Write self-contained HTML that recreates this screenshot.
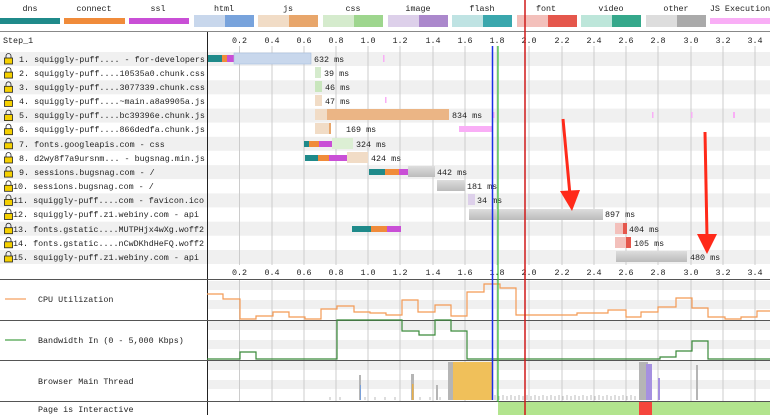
<!DOCTYPE html>
<html><head><meta charset="utf-8"><style>
html,body{margin:0;padding:0;background:#fff;width:770px;height:415px;overflow:hidden}
svg{display:block}
text{font-family:"Liberation Mono","DejaVu Sans Mono",monospace;font-size:8.4px;fill:#222}
</style></head><body>
<svg width="770" height="415" viewBox="0 0 770 415" xmlns="http://www.w3.org/2000/svg">
<defs>
<linearGradient id="g" x1="0" y1="0" x2="0" y2="1"><stop offset="0" stop-color="#ddd"/><stop offset="1" stop-color="#bbb"/></linearGradient>
</defs>
<!-- legend -->
<g text-anchor="middle">
<text x="30" y="11">dns</text><text x="94" y="11">connect</text><text x="158" y="11">ssl</text><text x="224" y="11">html</text><text x="288" y="11">js</text><text x="353" y="11">css</text><text x="418" y="11">image</text><text x="482" y="11">flash</text><text x="546" y="11">font</text><text x="611" y="11">video</text><text x="676" y="11">other</text><text x="740" y="11">JS Execution</text>
</g>
<rect x="0" y="18" width="60" height="6" fill="#1f8a8a"/>
<rect x="64" y="18" width="61" height="6" fill="#f08b3a"/>
<rect x="129" y="18" width="60" height="6" fill="#c94fd6"/>
<rect x="194" y="15" width="31" height="12" fill="#c8d7ec"/><rect x="225" y="15" width="29" height="12" fill="#78a3dc"/>
<rect x="258" y="15" width="31" height="12" fill="#f1dcc6"/><rect x="289" y="15" width="29" height="12" fill="#e8a66b"/>
<rect x="323" y="15" width="31" height="12" fill="#d5ebcd"/><rect x="354" y="15" width="29" height="12" fill="#9ed68e"/>
<rect x="388" y="15" width="31" height="12" fill="#ddd0ea"/><rect x="419" y="15" width="29" height="12" fill="#ab88cc"/>
<rect x="452" y="15" width="31" height="12" fill="#bfe3e3"/><rect x="483" y="15" width="29" height="12" fill="#3aa7ad"/>
<rect x="517" y="15" width="31" height="12" fill="#f3c0bb"/><rect x="548" y="15" width="29" height="12" fill="#e5574c"/>
<rect x="581" y="15" width="31" height="12" fill="#bde6da"/><rect x="612" y="15" width="29" height="12" fill="#35a88b"/>
<rect x="646" y="15" width="31" height="12" fill="#ddd"/><rect x="677" y="15" width="29" height="12" fill="#aaa"/>
<rect x="710" y="18" width="60" height="6" fill="#f9aef6"/>
<line x1="0" y1="31.5" x2="770" y2="31.5" stroke="#888" stroke-width="1"/>
<!-- row bands -->
<g fill="#f0f0f0">
<rect x="0" y="52" width="770" height="14"/><rect x="0" y="80.3" width="770" height="14"/><rect x="0" y="108.6" width="770" height="14"/><rect x="0" y="136.8" width="770" height="14"/><rect x="0" y="165.1" width="770" height="14"/><rect x="0" y="193.4" width="770" height="14"/><rect x="0" y="221.7" width="770" height="14"/><rect x="0" y="250" width="770" height="14"/>
</g>
<!-- bottom bands -->
<g fill="#f0f0f0">
<rect x="207" y="281" width="563" height="9"/><rect x="207" y="300" width="563" height="9"/>
<rect x="207" y="321" width="563" height="9"/><rect x="207" y="340" width="563" height="9"/>
<rect x="207" y="361" width="563" height="9"/><rect x="207" y="380" width="563" height="9"/>
</g>
<!-- grid lines -->
<g stroke="#ccc" stroke-width="1">
<line x1="239.5" y1="46" x2="239.5" y2="265"/><line x1="272" y1="46" x2="272" y2="265"/><line x1="304" y1="46" x2="304" y2="265"/><line x1="336" y1="46" x2="336" y2="265"/><line x1="368" y1="46" x2="368" y2="265"/><line x1="400" y1="46" x2="400" y2="265"/><line x1="433" y1="46" x2="433" y2="265"/><line x1="465" y1="46" x2="465" y2="265"/><line x1="497" y1="46" x2="497" y2="265"/><line x1="529" y1="46" x2="529" y2="265"/><line x1="562" y1="46" x2="562" y2="265"/><line x1="594" y1="46" x2="594" y2="265"/><line x1="626" y1="46" x2="626" y2="265"/><line x1="658" y1="46" x2="658" y2="265"/><line x1="691" y1="46" x2="691" y2="265"/><line x1="723" y1="46" x2="723" y2="265"/><line x1="755" y1="46" x2="755" y2="265"/>
<g transform="translate(0,0)">
<line x1="239.5" y1="280" x2="239.5" y2="402"/><line x1="272" y1="280" x2="272" y2="402"/><line x1="304" y1="280" x2="304" y2="402"/><line x1="336" y1="280" x2="336" y2="402"/><line x1="368" y1="280" x2="368" y2="402"/><line x1="400" y1="280" x2="400" y2="402"/><line x1="433" y1="280" x2="433" y2="402"/><line x1="465" y1="280" x2="465" y2="402"/><line x1="497" y1="280" x2="497" y2="402"/><line x1="529" y1="280" x2="529" y2="402"/><line x1="562" y1="280" x2="562" y2="402"/><line x1="594" y1="280" x2="594" y2="402"/><line x1="626" y1="280" x2="626" y2="402"/><line x1="658" y1="280" x2="658" y2="402"/><line x1="691" y1="280" x2="691" y2="402"/><line x1="723" y1="280" x2="723" y2="402"/><line x1="755" y1="280" x2="755" y2="402"/>
</g></g>
<!-- axis labels -->
<g text-anchor="middle">
<text x="239.5" y="43">0.2</text><text x="272" y="43">0.4</text><text x="304" y="43">0.6</text><text x="336" y="43">0.8</text><text x="368" y="43">1.0</text><text x="400" y="43">1.2</text><text x="433" y="43">1.4</text><text x="465" y="43">1.6</text><text x="497" y="43">1.8</text><text x="529" y="43">2.0</text><text x="562" y="43">2.2</text><text x="594" y="43">2.4</text><text x="626" y="43">2.6</text><text x="658" y="43">2.8</text><text x="691" y="43">3.0</text><text x="723" y="43">3.2</text><text x="755" y="43">3.4</text>
<text x="239.5" y="275">0.2</text><text x="272" y="275">0.4</text><text x="304" y="275">0.6</text><text x="336" y="275">0.8</text><text x="368" y="275">1.0</text><text x="400" y="275">1.2</text><text x="433" y="275">1.4</text><text x="465" y="275">1.6</text><text x="497" y="275">1.8</text><text x="529" y="275">2.0</text><text x="562" y="275">2.2</text><text x="594" y="275">2.4</text><text x="626" y="275">2.6</text><text x="658" y="275">2.8</text><text x="691" y="275">3.0</text><text x="723" y="275">3.2</text><text x="755" y="275">3.4</text>
</g>
<text x="3" y="43">Step_1</text>
<!-- labels -->
<g>
<text x="19" y="62">1. squiggly-puff.... - for-developers</text>
<text x="19" y="76">2. squiggly-puff....10535a0.chunk.css</text>
<text x="19" y="90">3. squiggly-puff....3077339.chunk.css</text>
<text x="19" y="104">4. squiggly-puff....~main.a8a9905a.js</text>
<text x="19" y="118">5. squiggly-puff....bc39396e.chunk.js</text>
<text x="19" y="132">6. squiggly-puff....866dedfa.chunk.js</text>
<text x="19" y="147">7. fonts.googleapis.com - css</text>
<text x="19" y="161">8. d2wy8f7a9ursnm... - bugsnag.min.js</text>
<text x="19" y="175">9. sessions.bugsnag.com - /</text>
<text x="13" y="189">10. sessions.bugsnag.com - /</text>
<text x="13" y="203">11. squiggly-puff....com - favicon.ico</text>
<text x="13" y="217">12. squiggly-puff.z1.webiny.com - api</text>
<text x="13" y="232">13. fonts.gstatic....MUTPHjx4wXg.woff2</text>
<text x="13" y="246">14. fonts.gstatic....nCwDKhdHeFQ.woff2</text>
<text x="13" y="260">15. squiggly-puff.z1.webiny.com - api</text>
</g>
<!-- locks -->
<g fill="#f5d000" stroke="#222" stroke-width="0.8">
<g id="lk"><path d="M6 58 v-2 a2.5 2.5 0 0 1 5 0 v2" fill="none"/><rect x="4.5" y="58" width="8" height="6"/></g>
<use href="#lk" y="14.1"/><use href="#lk" y="28.3"/><use href="#lk" y="42.4"/><use href="#lk" y="56.6"/><use href="#lk" y="70.7"/><use href="#lk" y="84.8"/><use href="#lk" y="99"/><use href="#lk" y="113.1"/><use href="#lk" y="127.3"/><use href="#lk" y="141.4"/><use href="#lk" y="155.5"/><use href="#lk" y="169.7"/><use href="#lk" y="183.8"/><use href="#lk" y="198"/>
</g>
<line x1="207.5" y1="32" x2="207.5" y2="415" stroke="#222" stroke-width="1"/>
<!-- bars -->
<g>
<rect x="208" y="55" width="14" height="7" fill="#1f8a8a"/><rect x="222" y="55" width="5" height="7" fill="#f08b3a"/><rect x="227" y="55" width="7" height="7" fill="#c94fd6"/><rect x="234" y="53" width="77" height="11" fill="#c8d7ec" stroke="#a9bfdf" stroke-width="0.6"/>
<text x="314" y="62">632 ms</text><rect x="383" y="55" width="1.5" height="7" fill="#f9aef6"/>
<rect x="315" y="67" width="6" height="11" fill="#d5ebcd"/><text x="324" y="76">39 ms</text>
<rect x="315" y="81" width="7" height="11" fill="#c9e6bd"/><text x="325" y="90">46 ms</text>
<rect x="315" y="95" width="7" height="11" fill="#f1dcc6"/><text x="325" y="104">47 ms</text><rect x="385" y="97" width="1.5" height="6" fill="#f9aef6"/>
<rect x="315" y="109" width="12" height="11" fill="#f1dcc6"/><rect x="327" y="109" width="122" height="11" fill="#ebb585"/>
<text x="452" y="118">834 ms</text><rect x="493" y="112" width="1.5" height="6" fill="#f9aef6"/><rect x="652" y="112" width="1.5" height="6" fill="#f9aef6"/><rect x="691" y="112" width="1.5" height="6" fill="#f9aef6"/><rect x="733" y="112" width="2" height="6" fill="#f9aef6"/>
<rect x="315" y="123" width="14" height="11" fill="#f1dcc6"/><rect x="329" y="123" width="2" height="11" fill="#e8a66b"/><text x="346" y="132">169 ms</text>
<rect x="459" y="126" width="33" height="6" fill="#f9aef6"/>
<rect x="304" y="141" width="5" height="6" fill="#1f8a8a"/><rect x="309" y="141" width="10" height="6" fill="#f08b3a"/><rect x="319" y="141" width="13" height="6" fill="#c94fd6"/><rect x="332" y="138" width="21" height="11" fill="#dcefd4"/><text x="356" y="147">324 ms</text>
<rect x="305" y="155" width="13" height="6" fill="#1f8a8a"/><rect x="318" y="155" width="11" height="6" fill="#f08b3a"/><rect x="329" y="155" width="18" height="6" fill="#c94fd6"/><rect x="347" y="152" width="21" height="11" fill="#f1dcc6"/><text x="371" y="161">424 ms</text>
<rect x="369" y="169" width="16" height="6" fill="#1f8a8a"/><rect x="385" y="169" width="14" height="6" fill="#f08b3a"/><rect x="399" y="169" width="9" height="6" fill="#c94fd6"/><rect x="408" y="166" width="27" height="11" fill="url(#g)"/><text x="437" y="175">442 ms</text>
<rect x="437" y="180" width="28" height="11" fill="url(#g)"/><text x="467" y="189">181 ms</text>
<rect x="468" y="194" width="7" height="11" fill="#ddd0ea"/><text x="477" y="203">34 ms</text>
<rect x="469" y="209" width="134" height="11" fill="url(#g)"/><text x="605" y="217">897 ms</text>
<rect x="352" y="226" width="19" height="6" fill="#1f8a8a"/><rect x="371" y="226" width="16" height="6" fill="#f08b3a"/><rect x="387" y="226" width="14" height="6" fill="#c94fd6"/>
<rect x="615" y="223" width="8" height="11" fill="#f3c0bb"/><rect x="623" y="223" width="4" height="11" fill="#e5574c"/><text x="629" y="232">404 ms</text>
<rect x="615" y="237" width="11" height="11" fill="#f3c0bb"/><rect x="626" y="237" width="5" height="11" fill="#e5574c"/><text x="634" y="246">105 ms</text>
<rect x="616" y="251" width="71" height="11" fill="url(#g)"/><text x="690" y="260">480 ms</text>
</g>
<!-- section lines -->
<g stroke="#555" stroke-width="1">
<line x1="0" y1="279.5" x2="770" y2="279.5"/><line x1="0" y1="320.5" x2="770" y2="320.5"/><line x1="0" y1="360.5" x2="770" y2="360.5"/><line x1="0" y1="401.5" x2="770" y2="401.5"/>
</g>
<!-- legends for graphs -->
<line x1="5" y1="299" x2="26" y2="299" stroke="#f5a060" stroke-width="1.2"/><text x="38" y="302">CPU Utilization</text>
<line x1="5" y1="340" x2="26" y2="340" stroke="#4aa24a" stroke-width="1.2"/><text x="38" y="343">Bandwidth In (0 - 5,000 Kbps)</text>
<text x="38" y="384">Browser Main Thread</text>
<text x="38" y="412">Page is Interactive</text>
<!-- CPU -->
<polyline fill="none" stroke="#f39a55" stroke-width="1.2" points="207,294 223,294 223,299 240,299 240,319 256,319 256,316 273,316 273,312 289,312 289,317 305,317 305,319 321,319 321,309 337,309 337,306 354,306 354,312 370,312 370,313 386,313 386,315 402,315 402,300 418,300 418,312 435,312 435,305 451,305 451,316 467,316 467,292 484,292 484,284 500,284 500,288 516,288 516,315 577,315 577,313 608,313 608,310 626,310 626,317 641,317 641,312 658,312 658,307 676,307 676,298 692,298 692,308 708,308 708,317 725,317 725,319 741,319 741,317 757,317 757,311 770,311"/>
<!-- Bandwidth -->
<polyline fill="none" stroke="#3a8a3a" stroke-width="1.2" points="207,359 240,359 240,352 256,352 256,359 337,359 337,320 402,320 402,331 419,331 419,335 435,335 435,320 451,320 451,331 467,331 467,359 660,359 660,357 676,357 676,351 692,351 692,341 708,341 708,359 770,359"/>
<!-- main thread -->
<rect x="451" y="362" width="41" height="38" fill="#f0c05a"/>
<rect x="448" y="362" width="5" height="38" fill="#b5b5b5"/>
<rect x="639" y="362" width="9" height="38" fill="#b5b5b5"/><rect x="646" y="364" width="6" height="36" fill="#a590e0"/>
<rect x="411" y="374" width="3" height="26" fill="#b5b5b5"/><rect x="412" y="384" width="1.5" height="16" fill="#e9b04a"/>
<rect x="359" y="375" width="2" height="25" fill="#b5b5b5"/><rect x="360" y="385" width="1" height="15" fill="#7aa0d8"/>
<rect x="436" y="385" width="2" height="15" fill="#b5b5b5"/>
<rect x="658" y="378" width="2" height="22" fill="#a590e0"/><rect x="696" y="365" width="2" height="35" fill="#b5b5b5"/>
<path d="M495 400 v-5 M499 400 v-4 M503 400 v-5 M507 400 v-4 M511 400 v-5 M515 400 v-4 M519 400 v-5 M523 400 v-4 M527 400 v-5 M531 400 v-4 M535 400 v-5 M539 400 v-4 M543 400 v-5 M547 400 v-4 M551 400 v-5 M555 400 v-4 M559 400 v-5 M563 400 v-4 M567 400 v-5 M571 400 v-4 M575 400 v-5 M579 400 v-4 M583 400 v-5 M587 400 v-4 M591 400 v-5 M595 400 v-4 M599 400 v-5 M603 400 v-4 M607 400 v-5 M611 400 v-4 M615 400 v-5 M619 400 v-4 M623 400 v-5 M627 400 v-4 M631 400 v-5 M635 400 v-4 M365 400 v-3 M375 400 v-3 M385 400 v-3 M395 400 v-3 M420 400 v-3 M430 400 v-3 M440 400 v-3 M330 400 v-3 M340 400 v-3" stroke="#bbb" stroke-width="1"/>
<!-- interactive -->
<rect x="498" y="402" width="272" height="13" fill="#b2e48e"/><rect x="639" y="402" width="13" height="13" fill="#f5463c"/>
<!-- marker lines -->
<line x1="492.5" y1="46" x2="492.5" y2="400" stroke="#1a2ee6" stroke-width="1.5"/>
<line x1="498" y1="46" x2="498" y2="402" stroke="#35c035" stroke-width="1.2"/>
<line x1="525" y1="0" x2="525" y2="415" stroke="#d01a1a" stroke-width="1.5"/>
<!-- red arrows -->
<g fill="#ff2a1a" stroke="#ff2a1a">
<line x1="563" y1="119" x2="570" y2="195" stroke-width="3"/>
<polygon points="560,191 580,190 572,211" stroke="none"/>
<line x1="705" y1="132" x2="707" y2="237" stroke-width="3"/>
<polygon points="697,234 717,234 707,254" stroke="none"/>
</g>
</svg>
</body></html>
